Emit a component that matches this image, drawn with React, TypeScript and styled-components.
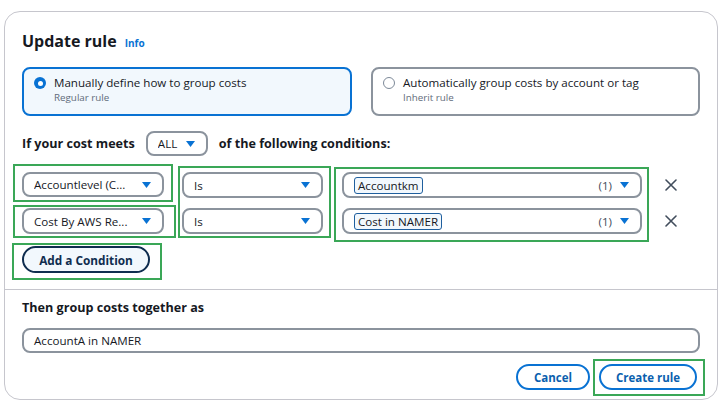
import React from "react";
import styled, { createGlobalStyle, css } from "styled-components";

const GlobalStyle = createGlobalStyle`
  html, body { margin: 0; padding: 0; background: #ffffff; }
  body { font-family: "Open Sans", "Noto Sans", sans-serif; color: #16191f; }
  * { box-sizing: border-box; }
`;

const BLUE = "#0972d3";
const GREEN = "#3aa757";
const GRAY_BORDER = "#8b939d";

const Card = styled.div`
  margin: 11px 0 0 4px;
  width: 714px;
  height: 389px;
  border: 1px solid #c6c6cd;
  border-radius: 16px;
  display: flex;
  flex-direction: column;
  overflow: hidden;
`;

const TopSection = styled.section`
  height: 277px;
  padding: 17px 17px 0 17px;
`;

const TitleRow = styled.div`
  display: flex;
  align-items: baseline;
  height: 24px;
  line-height: 24px;
`;

const Title = styled.h2`
  margin: 0;
  font-size: 16px;
  font-weight: 700;
  color: #16191f;
`;

const InfoLink = styled.span`
  margin-left: 8px;
  font-size: 10px;
  font-weight: 700;
  color: ${BLUE};
`;

const RadioGroup = styled.div`
  margin-top: 14px;
  display: grid;
  grid-template-columns: 330px 329px;
  column-gap: 19px;
`;

const RadioCard = styled.div<{ $selected?: boolean }>`
  height: 49px;
  border: 2px solid ${GRAY_BORDER};
  border-radius: 8px;
  padding: 6px 10px;
  display: flex;
  gap: 8px;
  align-items: flex-start;
  background: #ffffff;
  ${(p) =>
    p.$selected &&
    css`
      border-color: ${BLUE};
      background: #f2f8fd;
    `}
`;

const RadioDot = styled.span<{ $selected?: boolean }>`
  flex: none;
  margin-top: 2px;
  width: 12px;
  height: 12px;
  border-radius: 50%;
  display: flex;
  align-items: center;
  justify-content: center;
  border: 1.5px solid #7d8998;
  background: #ffffff;
  ${(p) =>
    p.$selected &&
    css`
      border: none;
      background: ${BLUE};
      &::after {
        content: "";
        width: 5px;
        height: 5px;
        border-radius: 50%;
        background: #ffffff;
      }
    `}
`;

const RadioTexts = styled.div`
  display: flex;
  flex-direction: column;
`;

const RadioTitle = styled.span`
  font-size: 11.6px;
  line-height: 16px;
  color: #16191f;
`;

const RadioSub = styled.span`
  font-size: 9.8px;
  line-height: 14px;
  color: #5f6b7a;
`;

const MatchRow = styled.div`
  margin-top: 15px;
  height: 25px;
  display: flex;
  align-items: center;
  gap: 11px;
`;

const BoldLabel = styled.span`
  font-size: 12.6px;
  font-weight: 700;
  color: #16191f;
`;

const SelectBox = styled.div<{ $width: number; $height?: number }>`
  width: ${(p) => p.$width}px;
  height: ${(p) => p.$height ?? 26}px;
  border: 2px solid ${GRAY_BORDER};
  border-radius: 8px;
  background: #ffffff;
  display: flex;
  align-items: center;
  padding: 0 11px 0 10px;
  font-size: 11.6px;
  color: #16191f;
  gap: 8px;
`;

const SelectText = styled.span`
  flex: 1;
  white-space: nowrap;
  overflow: hidden;
`;

const Count = styled.span`
  color: #414d5c;
  font-size: 11.6px;
`;

const Token = styled.span`
  display: inline-flex;
  align-items: center;
  height: 17px;
  padding: 0 3px;
  border: 1.5px solid #1f5f9e;
  border-radius: 3px;
  background: #f2f8fd;
  font-size: 11.6px;
  color: #16191f;
`;

const ConditionsGrid = styled.div`
  margin-top: 8px;
  margin-left: -9px;
  display: grid;
  grid-template-columns: 165px 156px 316px auto;
  grid-template-rows: 38px 33px auto;
  row-gap: 3px;
`;

const Highlight = styled.div`
  border: 2px solid ${GREEN};
`;

const FieldHighlight = styled(Highlight)<{
  $w: number;
  $h: number;
  $pad: string;
  $row: string;
  $col: number;
  $mt?: number;
  $ml?: number;
}>`
  grid-row: ${(p) => p.$row};
  grid-column: ${(p) => p.$col};
  width: ${(p) => p.$w}px;
  height: ${(p) => p.$h}px;
  padding: ${(p) => p.$pad};
  margin-top: ${(p) => p.$mt ?? 0}px;
  margin-left: ${(p) => p.$ml ?? 0}px;
  display: flex;
  flex-direction: column;
  gap: 10px;
  align-self: start;
`;

const RemoveColumn = styled.div`
  grid-row: 1 / 3;
  grid-column: 4;
  margin-top: 8px;
  padding-left: 15px;
  display: flex;
  flex-direction: column;
  gap: 10px;
  align-self: start;
`;

const RemoveButton = styled.span`
  height: 26px;
  width: 12px;
  display: flex;
  align-items: center;
  justify-content: center;
`;

const AddButton = styled.button`
  width: 128px;
  height: 27px;
  border: 2px solid #0f2d4f;
  border-radius: 14px;
  background: #f2f8fd;
  color: #0f2d4f;
  font-family: inherit;
  font-size: 11.8px;
  font-weight: 700;
  padding: 0;
  cursor: pointer;
`;

const Footer = styled.section`
  border-top: 1px solid #c6c6cd;
  padding: 9px 17px 0 17px;
  display: flex;
  flex-direction: column;
`;

const FooterLabel = styled(BoldLabel)`
  line-height: 18px;
`;

const TextInput = styled.div`
  margin-top: 11px;
  height: 25px;
  border: 2px solid ${GRAY_BORDER};
  border-radius: 8px;
  padding-left: 10px;
  display: flex;
  align-items: center;
  font-size: 11.6px;
  color: #16191f;
`;

const ButtonRow = styled.div`
  margin-top: 6px;
  margin-right: -5px;
  display: flex;
  justify-content: flex-end;
  align-items: flex-start;
`;

const OutlineButton = styled.button<{ $width: number }>`
  width: ${(p) => p.$width}px;
  height: 26px;
  border: 2px solid ${BLUE};
  border-radius: 14px;
  background: #ffffff;
  color: #0b5fae;
  font-family: inherit;
  font-size: 11.5px;
  font-weight: 700;
  padding: 0;
  cursor: pointer;
`;

const CancelButton = styled(OutlineButton)`
  margin-top: 5px;
`;

const ButtonHighlight = styled(Highlight)`
  margin-left: 3px;
  width: 112px;
  height: 37px;
  padding: 3px 0 0 4px;
`;

const Caret = () => (
  <svg width="9" height="6" viewBox="0 0 9 6" style={{ flex: "none" }}>
    <path d="M0 0 L9 0 L4.5 6 Z" fill={BLUE} />
  </svg>
);

const CloseIcon = () => (
  <svg width="12" height="12" viewBox="0 0 12 12">
    <path d="M1 1 L11 11 M11 1 L1 11" stroke="#414d5c" strokeWidth="1.6" strokeLinecap="round" />
  </svg>
);

export default function App() {
  return (
    <>
      <GlobalStyle />
      <Card>
        <TopSection>
          <TitleRow>
            <Title>Update rule</Title>
            <InfoLink>Info</InfoLink>
          </TitleRow>

          <RadioGroup>
            <RadioCard $selected>
              <RadioDot $selected />
              <RadioTexts>
                <RadioTitle>Manually define how to group costs</RadioTitle>
                <RadioSub>Regular rule</RadioSub>
              </RadioTexts>
            </RadioCard>
            <RadioCard>
              <RadioDot />
              <RadioTexts>
                <RadioTitle>Automatically group costs by account or tag</RadioTitle>
                <RadioSub>Inherit rule</RadioSub>
              </RadioTexts>
            </RadioCard>
          </RadioGroup>

          <MatchRow>
            <BoldLabel>If your cost meets</BoldLabel>
            <SelectBox $width={62} $height={25}>
              <SelectText>ALL</SelectText>
              <Caret />
            </SelectBox>
            <BoldLabel>of the following conditions:</BoldLabel>
          </MatchRow>

          <ConditionsGrid>
            <FieldHighlight $row="1" $col={1} $w={160} $h={38} $pad="6px 0 0 7px">
              <SelectBox $width={142} $height={25}>
                <SelectText>Accountlevel (C...</SelectText>
                <Caret />
              </SelectBox>
            </FieldHighlight>
            <FieldHighlight $row="2" $col={1} $w={163} $h={33} $pad="1px 0 0 7px">
              <SelectBox $width={142}>
                <SelectText>Cost By AWS Re...</SelectText>
                <Caret />
              </SelectBox>
            </FieldHighlight>
            <FieldHighlight $row="1 / 3" $col={2} $w={153} $h={72} $pad="4px 0 0 2px" $mt={2}>
              <SelectBox $width={141}>
                <SelectText>Is</SelectText>
                <Caret />
              </SelectBox>
              <SelectBox $width={141}>
                <SelectText>Is</SelectText>
                <Caret />
              </SelectBox>
            </FieldHighlight>
            <FieldHighlight $row="1 / 3" $col={3} $w={315} $h={75} $pad="3px 0 0 6px" $mt={3}>
              <SelectBox $width={300}>
                <SelectText>
                  <Token>Accountkm</Token>
                </SelectText>
                <Count>(1)</Count>
                <Caret />
              </SelectBox>
              <SelectBox $width={300}>
                <SelectText>
                  <Token>Cost in NAMER</Token>
                </SelectText>
                <Count>(1)</Count>
                <Caret />
              </SelectBox>
            </FieldHighlight>
            <RemoveColumn>
              <RemoveButton>
                <CloseIcon />
              </RemoveButton>
              <RemoveButton>
                <CloseIcon />
              </RemoveButton>
            </RemoveColumn>
            <FieldHighlight $row="3" $col={1} $w={150} $h={37} $pad="1px 0 0 8px" $mt={2} $ml={-1}>
              <AddButton>Add a Condition</AddButton>
            </FieldHighlight>
          </ConditionsGrid>
        </TopSection>

        <Footer>
          <FooterLabel>Then group costs together as</FooterLabel>
          <TextInput>AccountA in NAMER</TextInput>
          <ButtonRow>
            <CancelButton $width={74}>Cancel</CancelButton>
            <ButtonHighlight>
              <OutlineButton $width={98}>Create rule</OutlineButton>
            </ButtonHighlight>
          </ButtonRow>
        </Footer>
      </Card>
    </>
  );
}
